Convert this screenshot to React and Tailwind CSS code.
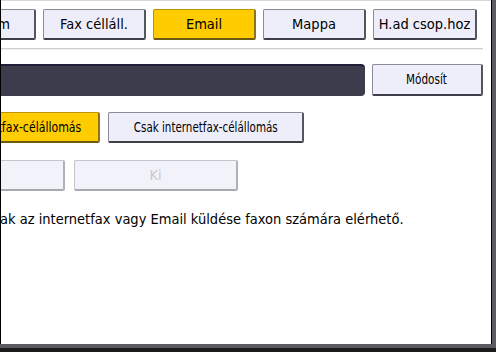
import React from "react";

const font = { fontFamily: '"DejaVu Sans Condensed", "DejaVu Sans", sans-serif' };

function Btn({ w, children, variant = "normal", className = "" }) {
  const v =
    variant === "yellow"
      ? "bg-[#ffcc00] border-[#b89400] border-b-[#6b5a10] border-r-[#8a7420]"
      : variant === "disabled"
      ? "bg-[#f2f2fb] border-[#c4c4cc] border-b-[#a8a8b0] border-r-[#b0b0b8] text-[#c8c8d0]"
      : "bg-[#eeeefb] border-[#8c8c96] border-b-[#3e3e46] border-r-[#55555e]";
  return (
    <div
      className={`shrink-0 h-[31px] flex items-center justify-center rounded-[2px] border border-b-2 border-r-2 text-[14.5px] leading-none whitespace-nowrap ${v} ${className}`}
      style={{ width: w }}
    >
      {children}
    </div>
  );
}

export default function App() {
  return (
    <div className="w-[496px] h-[352px] flex flex-col bg-[#1c1c1c]" style={font}>
      <div className="flex flex-1 min-h-0">
        <div className="w-px bg-black" />
        <div className="flex-1 bg-white flex flex-col overflow-hidden border-t border-[#d8d8d8]">
          {/* tab row */}
          <div className="flex gap-[7px] mt-[8px] ml-[-20px]">
            <Btn w={55} className="justify-end pr-[24px]">m</Btn>
            <Btn w={103}>Fax célláll.</Btn>
            <Btn w={103} variant="yellow">Email</Btn>
            <Btn w={103}>Mappa</Btn>
            <Btn w={104}>H.ad csop.hoz</Btn>
          </div>
          <div className="h-[2px] w-[482px] mt-[8px] bg-[#d0d0d0] border-b border-[#eeeeee]" />
          {/* name bar row */}
          <div className="flex mt-[14px] items-start">
            <div className="w-[364px] h-[32px] bg-[#3c3c4c] border-t-2 border-[#1e1e38] rounded-r-[4px]" />
            <Btn w={111} className="ml-[7px] h-[32px]">
              <span className="inline-block text-[14.5px] scale-x-[0.8]">Módosít</span>
            </Btn>
          </div>
          {/* row 2 */}
          <div className="flex mt-[16px] ml-[-90px]">
            <Btn w={189} variant="yellow" className="justify-end pr-[17px]">
              <span className="inline-block text-[14px] scale-x-[0.87] origin-right">Internetfax-célállomás</span>
            </Btn>
            <Btn w={196} className="ml-[8px]">
              <span className="inline-block text-[14px] scale-x-[0.82]">Csak internetfax-célállomás</span>
            </Btn>
          </div>
          {/* row 3 */}
          <div className="flex mt-[17px] ml-[-100px]">
            <Btn w={164} variant="disabled" />
            <Btn w={164} variant="disabled" className="ml-[9px]">Ki</Btn>
          </div>
          {/* text */}
          <div className="mt-[21px] ml-[-1px] text-[14.5px] leading-none text-black whitespace-nowrap">
            ak az internetfax vagy Email küldése faxon számára elérhető.
          </div>
        </div>
        <div className="w-px bg-black" />
        <div className="w-[4px] bg-[#5c5c62]" />
      </div>
      <div className="h-[4px] bg-[#5a5a60]" />
      <div className="h-[4px] bg-[#1c1c1c]" />
    </div>
  );
}
